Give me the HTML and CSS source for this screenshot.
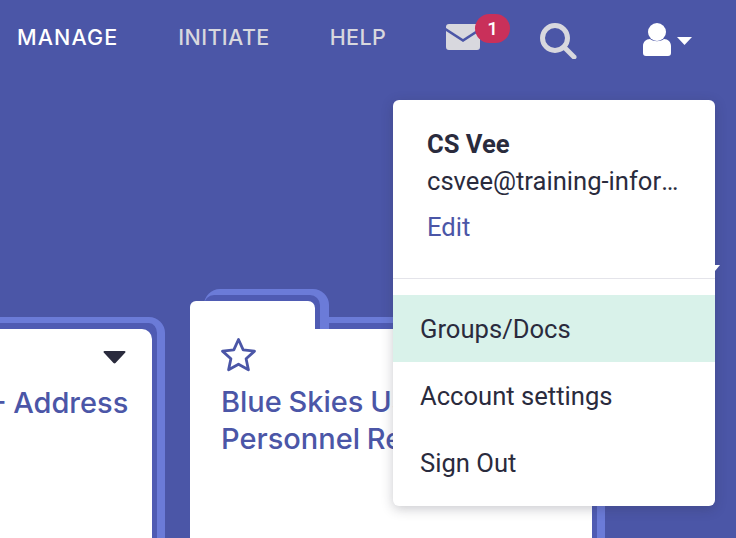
FILE: index.html
```html
<!DOCTYPE html>
<html lang="en">
<head>
    <meta charset="UTF-8">
    <title>Groups and Docs</title>
    <link rel="stylesheet" href="styles.css">
</head>
<body>
    <div class="navbar">
        <a class="nav-link active" href="#">MANAGE</a>
        <a class="nav-link" href="#">INITIATE</a>
        <a class="nav-link" href="#">HELP</a>
        <div class="mail">
            <svg width="34" height="26" viewBox="0 0 34 26">
                <path d="M3 0h28a3 3 0 0 1 3 3v1L17 15 0 4V3a3 3 0 0 1 3-3z" fill="#d8d8de"/>
                <path d="M0 7l17 11L34 7v16a3 3 0 0 1-3 3H3a3 3 0 0 1-3-3z" fill="#d8d8de"/>
            </svg>
            <span class="badge">1</span>
        </div>
        <svg class="search" width="37" height="36" viewBox="0 0 37 36">
            <circle cx="15" cy="15" r="12.5" fill="none" stroke="#d8d8de" stroke-width="5"/>
            <path d="M24 24l10 10" stroke="#d8d8de" stroke-width="5" stroke-linecap="round"/>
        </svg>
        <div class="user">
            <svg width="28" height="33" viewBox="0 0 28 33">
                <circle cx="14" cy="9" r="9" fill="#fff"/>
                <path d="M7 16c4 3 10 3 14 0 4 0 7 3 7 7v7a3 3 0 0 1-3 3H3a3 3 0 0 1-3-3v-7c0-4 3-7 7-7z" fill="#fff"/>
            </svg>
            <svg width="15" height="8" viewBox="0 0 15 8"><path d="M0 0h15L7.500 8z" fill="#fff"/></svg>
        </div>
    </div>

    <div class="cards">
        <div class="folder folder-left">
            <div class="folder-frame">
                <div class="card">
                    <svg class="card-caret" width="23" height="13" viewBox="0 0 23 13">
                        <path d="M1.500 0h20a1 1 0 0 1 .8 1.600L12.500 12a1.500 1.500 0 0 1-2 0L.7 1.600A1 1 0 0 1 1.500 0z" fill="#2a2b3d"/>
                    </svg>
                    <div class="card-title">- Address</div>
                </div>
            </div>
        </div>
        <div class="folder folder-main">
            <div class="tab-back"></div>
            <div class="tab"></div>
            <div class="folder-frame">
                <div class="card">
                    <svg class="star" width="37" height="35" viewBox="0 0 37 35">
                        <path d="M18.500 2.500l4.700 10.300 11.300 1.300-8.400 7.600 2.300 11.100-9.900-5.600-9.900 5.600 2.300-11.100-8.400-7.600 11.300-1.300z" fill="none" stroke="#4b56a7" stroke-width="2.800" stroke-linejoin="round"/>
                    </svg>
                    <div class="card-title">Blue Skies USA<br>Personnel Records</div>
                </div>
            </div>
        </div>
    </div>

    <div class="dropdown">
        <div class="profile">
            <div class="profile-name">CS Vee</div>
            <div class="profile-email">csvee@training-information.com</div>
            <a class="profile-edit" href="#">Edit</a>
        </div>
        <a class="menu-item selected" href="#">Groups/Docs</a>
        <a class="menu-item" href="#">Account settings</a>
        <a class="menu-item" href="#">Sign Out</a>
    </div>
</body>
</html>
```

FILE: styles.css
```css
html, body {
    height: 100%;
    margin: 0;
    overflow: hidden;
}

body {
    background: #4b56a7;
    font-family: "Roboto", sans-serif;
    color: #2a2b3d;
}

a {
    text-decoration: none;
}

.navbar {
    display: flex;
    align-items: center;
    height: 74px;
    padding-left: 17px;
}

.nav-link {
    font-family: "Inter", sans-serif;
    font-size: 21.500px;
    font-weight: 500;
    letter-spacing: 0.400px;
    color: #d8d8de;
    margin-right: 60px;
}

.nav-link.active {
    color: #fff;
    letter-spacing: 1.100px;
}

.mail {
    position: relative;
    display: flex;
}

.badge {
    position: absolute;
    left: 29px;
    top: -10px;
    width: 35px;
    height: 29px;
    border-radius: 15px;
    background: #c9305a;
    color: #fff;
    font-size: 19px;
    font-weight: 500;
    line-height: 29px;
    text-align: center;
}

.search {
    margin-left: 60px;
    margin-top: 7px;
}

.user {
    display: flex;
    align-items: center;
    gap: 6px;
    margin-left: 66px;
    margin-top: 5px;
}

.user svg:last-child {
    margin-top: 3px;
}

.cards {
    display: flex;
    gap: 25px;
    margin-left: -38px;
    padding-top: 243px;
}

.folder {
    position: relative;
    flex: none;
}

.folder-left {
    width: 203px;
}

.folder-main {
    width: 415px;
}

.folder-frame {
    background: #4f5bb3;
    border: solid #6b7bd8;
    border-width: 6px 8px 0 0;
    border-radius: 0 16px 0 0;
    padding: 6px 5px 0 0;
}

.card {
    position: relative;
    height: 300px;
    padding: 8px 31px;
    background: #fff;
    border-radius: 0 10px 0 0;
}

.card-caret {
    position: absolute;
    right: 26px;
    top: 22px;
}

.card-title {
    font-family: "Inter", sans-serif;
    font-size: 29px;
    font-weight: 500;
    line-height: 37px;
    word-spacing: -1px;
    white-space: nowrap;
    color: #4b56a7;
}

.folder-left .card-title {
    margin-top: 47px;
}

.star {
    display: block;
    margin-bottom: 11px;
    margin-left: -1px;
}

.folder-main .card {
    border-radius: 0;
}

.tab {
    position: absolute;
    z-index: 1;
    left: 0;
    top: -16px;
    width: 125px;
    height: 29px;
    background: #fff;
    border-radius: 6px 7px 0 0;
}

.tab-back {
    position: absolute;
    left: 14px;
    top: -28px;
    width: 125px;
    height: 40px;
    background: #6b7bd8;
    border-radius: 16px 16px 0 0;
}

.tab-back::before {
    content: "";
    position: absolute;
    left: 0;
    top: 6px;
    right: 9px;
    bottom: 0;
    background: #4f5bb3;
    border-radius: 10px 10px 0 0;
}

.dropdown {
    position: absolute;
    left: 393px;
    top: 100px;
    width: 322px;
    height: 406px;
    background: #fff;
    border-radius: 6px;
    box-shadow: 0 3px 12px rgba(42, 43, 61, 0.25);
}

.dropdown::after {
    content: "";
    position: absolute;
    left: 322px;
    top: 165px;
    border-top: 6px solid #fff;
    border-right: 5px solid transparent;
}

.profile {
    height: 179px;
    padding: 27px 34px 0;
    box-sizing: border-box;
    border-bottom: 1px solid #e4e4ea;
    margin-bottom: 16px;
}

.profile-name {
    font-size: 25.600px;
    font-weight: 700;
    line-height: 34px;
}

.profile-email {
    width: 252px;
    font-size: 25.600px;
    line-height: 40px;
    overflow: hidden;
    white-space: nowrap;
    text-overflow: ellipsis;
}

.profile-edit {
    display: block;
    margin-top: 9px;
    font-size: 25.600px;
    line-height: 34px;
    color: #4b56a7;
}

.menu-item {
    display: block;
    height: 67px;
    padding-left: 27px;
    font-size: 25.600px;
    line-height: 68px;
    color: #2a2b3d;
}

.menu-item.selected {
    background: #d9f2ea;
}
```
